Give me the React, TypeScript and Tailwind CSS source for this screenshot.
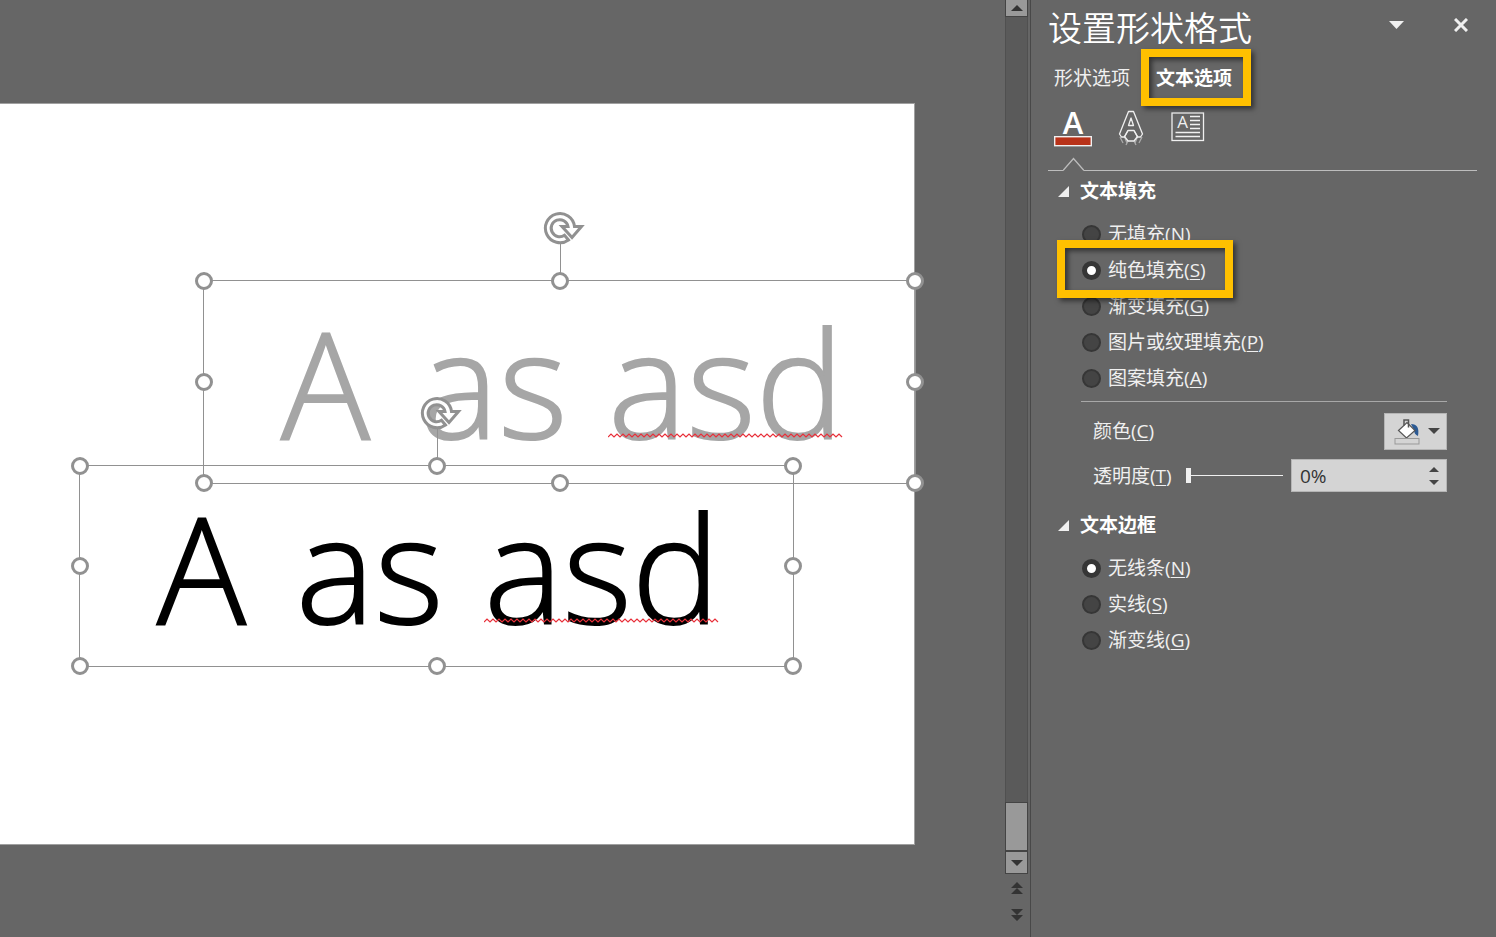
import React from 'react'
import clsx from 'clsx'

interface RadioOption {
    id: string;
    label: string;
    accessKey: string;
    checked?: boolean;
    highlighted?: boolean;
}

interface TextShapeProps {
    className: string;
    textClassName: string;
}

const FILL_OPTIONS: RadioOption[] = [
    { id: 'fill-none', label: '无填充', accessKey: 'N' },
    { id: 'fill-solid', label: '纯色填充', accessKey: 'S', checked: true, highlighted: true },
    { id: 'fill-gradient', label: '渐变填充', accessKey: 'G' },
    { id: 'fill-picture', label: '图片或纹理填充', accessKey: 'P' },
    { id: 'fill-pattern', label: '图案填充', accessKey: 'A' },
]

const LINE_OPTIONS: RadioOption[] = [
    { id: 'line-none', label: '无线条', accessKey: 'N', checked: true },
    { id: 'line-solid', label: '实线', accessKey: 'S' },
    { id: 'line-gradient', label: '渐变线', accessKey: 'G' },
]

const HANDLE_POSITIONS = [
    'left-0 top-0',
    'left-1/2 top-0',
    'left-full top-0',
    'left-0 top-1/2',
    'left-full top-1/2',
    'left-0 top-full',
    'left-1/2 top-full',
    'left-full top-full',
]

export default function App() {
    return (
        <div className="flex min-h-screen bg-[#666666] font-['Open_Sans','Noto_Sans_CJK_SC',sans-serif] text-[#f0f0f0]">
            <main className="min-w-0 flex-1 overflow-hidden pt-[103px] pr-[90px] pb-[92px]">
                <div className="relative h-[742px] border border-l-0 border-[#a0a0a0] bg-white">
                    <TextShape className="left-[203px] top-[176px] h-[204px] w-[713px]" textClassName="text-[#a6a6a6]" />
                    <TextShape className="left-[79px] top-[361px] h-[202px] w-[715px]" textClassName="text-black" />
                </div>
            </main>
            <ScrollBar />
            <FormatPanel />
        </div>
    );
}

function TextShape({ className, textClassName }: TextShapeProps) {
    return (
        <div className={clsx('absolute border border-[#919191]', className)}>
            <p className={clsx('flex gap-[41px] pt-[13px] pl-[77px] text-[148px] leading-[176px] font-light [-webkit-text-stroke:2px]', textClassName)}>
                <span className="w-[98px]">A</span>
                <span>as</span>
                <span className="relative">
                    asd
                    <Squiggle />
                </span>
            </p>
            <span className="absolute -top-[38px] left-1/2 h-[38px] w-px bg-[#919191]" />
            <RotateHandle />
            {HANDLE_POSITIONS.map(position => (
                <span
                    key={position}
                    className={clsx('absolute h-[18px] w-[18px] -translate-x-1/2 -translate-y-1/2 rounded-full border-3 border-[#919191] bg-white', position)}
                />
            ))}
        </div>
    );
}

function Squiggle() {
    const points = Array.from({ length: 79 }, (_, i) => `${i * 3},${i % 2 ? 1 : 4}`).join(' ')

    return (
        <svg className="absolute left-0 top-[139px]" width="235" height="5" viewBox="0 0 235 5" fill="none">
            <polyline points={points} stroke="#e8303a" strokeWidth="1.2" />
        </svg>
    );
}

function RotateHandle() {
    return (
        <svg className="absolute -top-[73px] left-1/2 -ml-[18px]" width="44" height="40" viewBox="-18 -20 44 40">
            <path
                d="M8.5 12 A14.6 14.6 0 1 1 14.5 -1.5 H21.5 L12 9.5 L2 -1.5 H8 A8.5 8.5 0 1 0 4.5 7.2 Z"
                fill="#fff"
                fillOpacity="0.95"
                stroke="#919191"
                strokeWidth="3"
            />
        </svg>
    );
}

function ScrollBar() {
    return (
        <div className="mr-[2px] flex w-[23px] flex-col bg-[#5a5a5a]">
            <button type="button" aria-label="向上滚动" className="flex h-[17px] items-center justify-center border border-t-0 border-[#444] bg-[#999]">
                <svg width="12" height="6" viewBox="0 0 12 6"><path d="M6 0 12 6H0z" fill="#333" /></svg>
            </button>
            <div className="flex-1 border-x border-[#505050]" />
            <div className="h-[49px] border border-[#444] bg-[#999]" />
            <button type="button" aria-label="向下滚动" className="flex h-[23px] items-center justify-center border border-[#444] bg-[#999]">
                <svg width="12" height="6" viewBox="0 0 12 6"><path d="M0 0h12L6 6z" fill="#333" /></svg>
            </button>
            <div className="flex h-[63px] flex-col items-center gap-[14px] bg-[#666666] pt-[8px]">
                <button type="button" aria-label="上一张幻灯片">
                    <svg className="block" width="12" height="13" viewBox="0 0 12 13"><path d="M6 0 12 6H0zM6 6l6 6H0z" fill="#333" /></svg>
                </button>
                <button type="button" aria-label="下一张幻灯片">
                    <svg className="block" width="12" height="13" viewBox="0 0 12 13"><path d="M0 0h12L6 6zM0 6h12l-6 6z" fill="#333" /></svg>
                </button>
            </div>
        </div>
    );
}

function FormatPanel() {
    return (
        <aside className="w-[466px] shrink-0 border-l border-[#484848] pr-[19px] pl-[17px] text-[19px] leading-6">
            <header className="flex h-14 items-center">
                <h1 className="flex-1 text-[34px] leading-10 font-[350] text-white">设置形状格式</h1>
                <button type="button" aria-label="任务窗格选项" className="mb-[6px] mr-[50px]">
                    <svg className="block" width="15" height="8" viewBox="0 0 15 8"><path d="M0 0h15L7.500 8z" fill="#f0f0f0" /></svg>
                </button>
                <button type="button" aria-label="关闭" className="mb-[6px] mr-[9px]">
                    <svg className="block" width="14" height="14" viewBox="0 0 14 14" stroke="#f0f0f0" strokeWidth="3"><path d="M1 1l12 12M13 1 1 13" /></svg>
                </button>
            </header>

            <div className="flex h-11 gap-[26px] pl-[6px]" role="tablist">
                <button type="button" role="tab" aria-selected="false">形状选项</button>
                <button type="button" role="tab" aria-selected="true" className="relative font-bold text-white">
                    文本选项
                    <Highlight className="-top-[7px] -right-[19px] -bottom-[6px] -left-[15px]" />
                </button>
            </div>

            <div className="flex h-[57px] items-start pt-[9px] pl-[6px]">
                <button type="button" aria-label="文本填充与轮廓" className="mr-[26px]"><TextFillIcon /></button>
                <button type="button" aria-label="文字效果" className="mr-[27px]"><TextEffectsIcon /></button>
                <button type="button" aria-label="文本框"><TextBoxIcon /></button>
            </div>
            <div className="flex">
                <div className="w-[15px] border-b border-[#bdbdbd]" />
                <svg className="block" width="21" height="14" viewBox="0 0 21 14" fill="none"><path d="M0 13.500 10.500 1.500 21 13.500" stroke="#bdbdbd" strokeWidth="1.300" /></svg>
                <div className="flex-1 border-b border-[#bdbdbd]" />
            </div>

            <SectionTitle title="文本填充" />
            <RadioList name="text-fill" options={FILL_OPTIONS} />

            {/* 颜色与透明度 */}
            <div className="mt-[5px] mr-[30px] ml-[33px] border-t border-[#a8a8a8] pl-[12px]">
                <div className="flex h-[58px] items-center justify-between">
                    <span>颜色(<u className="underline-offset-2">C</u>)</span>
                    <button type="button" aria-label="颜色" className="flex h-[37px] w-[63px] items-center gap-[7px] border border-[#b5b5b5] bg-[#d4d4d4] pl-[9px]">
                        <PaintBucketIcon />
                        <svg width="12" height="6" viewBox="0 0 12 6"><path d="M0 0h12L6 6z" fill="#444" /></svg>
                    </button>
                </div>
                <div className="flex h-[31px] items-center">
                    <label htmlFor="transparency" className="w-[93px] shrink-0">透明度(<u className="underline-offset-2">T</u>)</label>
                    <input
                        id="transparency"
                        type="range"
                        min="0"
                        max="100"
                        defaultValue="0"
                        className="h-4 w-[97px] appearance-none bg-[linear-gradient(#f0f0f0,#f0f0f0)] bg-[length:100%_1px] bg-center bg-no-repeat [&::-webkit-slider-thumb]:h-[15px] [&::-webkit-slider-thumb]:w-[5px] [&::-webkit-slider-thumb]:appearance-none [&::-webkit-slider-thumb]:bg-[#f0f0f0]"
                    />
                    <div className="ml-auto flex h-[33px] w-[156px] border border-[#b5b5b5] bg-[#d4d4d4] text-[#333]">
                        <input type="text" aria-label="透明度百分比" defaultValue="0%" className="min-w-0 flex-1 pl-2 outline-none" />
                        <div className="flex w-[24px] flex-col items-center justify-center gap-[8px]">
                            <button type="button" aria-label="增加"><svg className="block" width="10" height="5" viewBox="0 0 10 5"><path d="M5 0l5 5H0z" fill="#444" /></svg></button>
                            <button type="button" aria-label="减少"><svg className="block" width="10" height="5" viewBox="0 0 10 5"><path d="M0 0h10L5 5z" fill="#444" /></svg></button>
                        </div>
                    </div>
                </div>
            </div>

            <div className="h-[14px]" />
            <SectionTitle title="文本边框" />
            <RadioList name="text-outline" options={LINE_OPTIONS} />
        </aside>
    );
}

function Highlight({ className }: { className: string }) {
    return (
        <span className={clsx('pointer-events-none absolute z-10 border-8 border-[#ffc000] shadow-[3px_3px_5px_rgba(0,0,0,0.5),inset_3px_3px_5px_rgba(0,0,0,0.5)]', className)} />
    );
}

function SectionTitle({ title }: { title: string }) {
    return (
        <h2 className="flex h-10 items-center gap-[11px] pl-[10px] font-bold text-white">
            <svg width="11" height="11" viewBox="0 0 11 11"><path d="M11 0v11H0z" fill="#f0f0f0" /></svg>
            {title}
        </h2>
    );
}

function RadioList({ name, options }: { name: string; options: RadioOption[] }) {
    return (
        <div className="pt-[5px] pl-[34px]">
            {options.map(option => (
                <div key={option.id} className="relative flex h-9 items-center gap-[7px]">
                    <input
                        id={option.id}
                        type="radio"
                        name={name}
                        defaultChecked={option.checked}
                        className="h-[19px] w-[19px] appearance-none rounded-full border-2 border-[#363636] bg-[#444] checked:border-5 checked:bg-white"
                    />
                    <label htmlFor={option.id}>
                        {option.label}(<u className="underline-offset-2">{option.accessKey}</u>)
                    </label>
                    {option.highlighted && <Highlight className="-top-[12px] -bottom-[10px] -left-[25px] w-[176px]" />}
                </div>
            ))}
        </div>
    );
}

function TextFillIcon() {
    return (
        <svg className="block overflow-visible" width="38" height="38" viewBox="0 0 38 38">
            <text x="19" y="25" textAnchor="middle" fontSize="31" fontWeight="600" fontFamily="Open Sans" fill="#fff">A</text>
            <rect x="0.700" y="27.700" width="36.600" height="9" fill="#b83219" stroke="#f0f0f0" strokeWidth="1.400" />
        </svg>
    );
}

function TextEffectsIcon() {
    return (
        <svg className="block" width="26" height="38" viewBox="0 0 26 38" fill="none" stroke="#f0f0f0" strokeWidth="1.300" strokeLinejoin="round">
            <path d="M10.500 2.500h5L24.500 25l-2 3h-3L16 21.500h-6L6.500 28h-3l-2-3z" />
            <path d="M13 9 10.500 16.500h5z" />
            <path d="M10 21.500 6.500 27.500 10 32h6l3.500-4.500-3.500-6" />
            <path d="M2 28l3 6M6.500 28 9 34M10 32l-2 4M24 28l-3 6M19.500 28 17 34M16 32l2 4" opacity="0.500" />
        </svg>
    );
}

function TextBoxIcon() {
    return (
        <svg className="block" width="34" height="34" viewBox="0 0 34 34" fill="none" stroke="#f0f0f0" strokeWidth="1.300">
            <rect x="1" y="4" width="31.500" height="27.500" />
            <text x="11.500" y="19" textAnchor="middle" fontSize="17" fontFamily="Open Sans" fill="#f0f0f0" stroke="none">A</text>
            <path d="M19 7.500h10M19 11.500h10M19 15.500h10M19 19.500h10M4.500 23.500H29M4.500 27.500H29" />
        </svg>
    );
}

function PaintBucketIcon() {
    return (
        <svg width="27" height="27" viewBox="0 0 27 27">
            <path d="M17 6c6 0 8.500 4 7 12-2.500-1-4-3-4-6z" fill="#2b5a94" />
            <path d="M4.500 12.500 13 4.500l8 8L12.500 20z" fill="#fff" stroke="#555" strokeWidth="1.200" />
            <path d="M10 7.500V2h4.500v7.500" fill="none" stroke="#555" strokeWidth="1.500" />
            <rect x="1" y="20.500" width="24" height="5.500" fill="#d4d4d4" stroke="#999" />
        </svg>
    );
}
